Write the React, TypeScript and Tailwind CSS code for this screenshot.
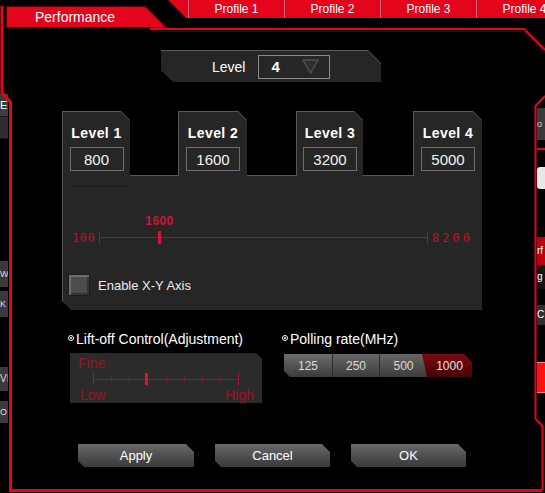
import React from "react";

function LevelTab({
  label,
  value,
  cls,
  tall,
}: {
  label: string;
  value: string;
  cls: string;
  tall?: boolean;
}) {
  return (
    <div
      className={
        "shrink-0 bg-[#585858] pt-px pl-px [clip-path:polygon(0_0,calc(100%_-_9px)_0,100%_9px,100%_100%,0_100%)] " +
        cls +
        (tall ? " h-[77px]" : " h-[65px]")
      }
    >
      <div className="flex h-full flex-col items-center bg-[#262626] [clip-path:polygon(0_0,calc(100%_-_9px)_0,100%_9px,100%_100%,0_100%)]">
        <div className="mt-[13px] h-[16px] text-[14px] font-bold leading-[16px] tracking-[0.4px] text-white">
          {label}
        </div>
        <div className="mt-[6px] flex h-[24px] w-[54px] items-center justify-center border border-[#6e6e6e] text-[15px] leading-none text-[#f2f2f2]">
          {value}
        </div>
        {tall && <div className="mt-auto mb-[1px] ml-[9px] h-[2px] w-[56px] self-start bg-[#1d1d1d]" />}
      </div>
    </div>
  );
}

function Btn({ label, cls }: { label: string; cls: string }) {
  return (
    <div
      className={
        "flex h-[23px] items-center justify-center bg-[#2a2a2a] [clip-path:polygon(0_0,calc(100%_-_8px)_0,100%_8px,100%_100%,6px_100%,0_calc(100%_-_6px))] " +
        cls
      }
    >
      <div className="flex h-full w-full items-center justify-center bg-linear-to-b from-[#6a6a6a] via-[#505050] to-[#3a3a3a] text-[13px] text-white [clip-path:polygon(0_0,calc(100%_-_8px)_0,100%_8px,100%_100%,6px_100%,0_calc(100%_-_6px))]">
        {label}
      </div>
    </div>
  );
}

export default function App() {
  const profiles = ["Profile 1", "Profile 2", "Profile 3", "Profile 4"];
  const digi = "font-['DejaVu_Sans_Mono','Liberation_Mono',monospace]";
  return (
    <div className="relative h-[493px] w-[545px] overflow-hidden bg-black font-['Liberation_Sans',Arial,sans-serif] text-white select-none">
      {/* background window fragments, left */}
      <div className="absolute left-0 top-[94px] flex w-[8px] flex-col">
        <div className="flex h-[22px] items-center overflow-hidden bg-[#3d3d3d] text-[11px] leading-none text-white">E</div>
        <div className="h-px bg-[#1a1a1a]" />
        <div className="h-[21px] bg-[#2e2e2e]" />
        <div className="h-px bg-[#151515]" />
        <div className="mt-[122px] flex h-[26px] items-center overflow-hidden bg-[#3a3a3a] text-[9px] leading-none text-[#ddd]">W</div>
        <div className="mt-[4px] flex h-[26px] items-center overflow-hidden bg-[#3a3a3a] text-[9px] leading-none text-[#ddd]">K</div>
        <div className="mt-[50px] flex h-[24px] items-center overflow-hidden bg-[#3a3a3a] text-[10px] leading-none text-[#ddd]">VI</div>
        <div className="mt-[10px] flex h-[22px] items-center overflow-hidden bg-[#3a3a3a] text-[9px] leading-none text-[#ddd]">O</div>
      </div>
      {/* background window fragments, right */}
      <div className="absolute left-[537px] top-[108px] flex w-[8px] flex-col">
        <div className="flex h-[32px] items-center overflow-hidden bg-[#3a3a3a] text-[9px] leading-none text-[#ccc]">o</div>
        <div className="mt-[8px] h-[2px] bg-[#d0061c]" />
        <div className="mt-[17px] h-[22px] rounded-l-[3px] bg-[#e8e8e8]" />
        <div className="mt-[48px] flex h-[28px] items-center overflow-hidden bg-[#b8000f] text-[10px] leading-none text-white">rf</div>
        <div className="flex h-[24px] items-center overflow-hidden bg-[#141414] text-[10px] leading-none text-white">g</div>
        <div className="mt-[16px] flex h-[20px] items-center overflow-hidden bg-[#2e2e2e] text-[10px] leading-none text-white">C</div>
        <div className="mt-[37px] h-[31px] border-y border-[#ff8080] bg-[#ff1010]" />
      </div>

      {/* header */}
      <div className="flex h-[30px]">
        <div className="mt-[6px] ml-[6px] h-[22px] w-[162px] shrink-0 bg-[#5e0009] [clip-path:polygon(0_0,140px_0,162px_22px,0_22px)]">
          <div className="mt-px ml-px flex h-[20px] w-[160px] items-center bg-[#e3051b] pl-[28px] text-[14px] leading-none text-white [clip-path:polygon(0_0,138px_0,158px_20px,0_20px)]">
            Performance
          </div>
        </div>
        <div className="flex h-[18px] flex-1 overflow-hidden bg-[#e3051b] [clip-path:polygon(0_0,100%_0,100%_100%,18px_100%)]">
          <div className="w-[20px] shrink-0" />
          {profiles.map((p) => (
            <div
              key={p}
              className="w-[96px] shrink-0 border-l border-[#f26370] text-center text-[12px] leading-[18px] text-white"
            >
              {p}
            </div>
          ))}
        </div>
      </div>

      {/* body */}
      <div className="flex flex-col">
        {/* level selector */}
        <div className="mt-[20px] ml-[161px] h-[32px] w-[220px] bg-[#5a5a5a] [clip-path:polygon(0_0,207px_0,220px_13px,220px_32px,13px_32px,0_20px)]">
          <div className="mt-px flex h-[31px] w-[220px] items-center bg-[#262626] [clip-path:polygon(0_0,207px_0,220px_13px,220px_31px,13px_31px,0_19px)]">
            <span className="ml-[51px] text-[14px] leading-none text-white">Level</span>
            <div className="ml-[13px] flex h-[24px] w-[72px] items-center border border-[#8a8a8a]">
              <span className="ml-[12px] text-[15px] font-bold leading-none text-white">4</span>
              <svg className="ml-[22px]" width="17" height="15" viewBox="0 0 17 15">
                <polygon points="1,1 16,1 8.5,14" fill="#2e2e2e" stroke="#4e4e4e" strokeWidth="1.5" />
              </svg>
            </div>
          </div>
        </div>

        {/* tabs + panel */}
        <div className="mt-[29px] ml-[62px] w-[420px]">
          <div className="relative z-10 flex h-[64px] items-start">
            <LevelTab label="Level 1" value="800" cls="w-[68px]" tall />
            <LevelTab label="Level 2" value="1600" cls="ml-[48px] w-[69px]" />
            <LevelTab label="Level 3" value="3200" cls="ml-[49px] w-[67px]" />
            <LevelTab label="Level 4" value="5000" cls="ml-[50px] w-[69px]" />
          </div>
          <div className="flex h-[135px] w-[420px] flex-col border-t border-l border-[#575757] bg-[#262626] [clip-path:polygon(0_0,100%_0,100%_100%,9px_100%,0_calc(100%_-_9px))]">
            {/* dpi slider */}
            <div className="mt-[55px] flex h-[13px] items-center">
              <span className={"ml-[9px] w-[27px] text-[12px] leading-none tracking-[0.5px] text-[#c0102e] " + digi}>100</span>
              <div className="relative h-[13px] w-[329px]">
                <div className="absolute left-0 top-[6px] h-px w-full bg-[#a8102c]" />
                <div className="absolute left-0 top-0 h-[13px] w-px bg-[#a8102c]" />
                <div className="absolute right-0 top-0 h-[13px] w-px bg-[#a8102c]" />
                <div className="absolute left-[59px] top-0 h-[13px] w-[3px] bg-[#e01034]" />
                <div className="absolute left-[44px] -top-[16px] w-[33px] text-center text-[12px] font-bold leading-none tracking-[0.4px] text-[#d01436]">
                  1600
                </div>
              </div>
              <span className={"ml-[4px] text-[12px] leading-none tracking-[3px] text-[#c0102e] " + digi}>8200</span>
            </div>
            {/* checkbox */}
            <div className="mt-[30px] ml-[5px] flex items-center">
              <div className="h-[22px] w-[22px] border border-[#1c1c1c] bg-[#4c4c4c] shadow-[inset_2px_2px_0_#6e6e6e,inset_-2px_-2px_0_#353535]" />
              <span className="ml-[8px] text-[13px] leading-none text-[#ececec]">Enable X-Y Axis</span>
            </div>
          </div>
        </div>

        {/* lift-off + polling */}
        <div className="mt-[21px] ml-[68px] flex">
          <div className="flex w-[214px] flex-col">
            <div className="flex h-[16px] items-center text-[14px] leading-[16px] text-white">
              <span className="mr-[2px] mb-[3px] flex h-[6px] w-[6px] items-center justify-center rounded-full border border-white">
                <span className="h-[2px] w-[2px] rounded-full bg-white" />
              </span>
              Lift-off Control(Adjustment)
            </div>
            <div className="mt-[6px] ml-[2px] flex h-[50px] w-[192px] flex-col bg-[#2b2b2b] [clip-path:polygon(0_0,calc(100%_-_6px)_0,100%_6px,100%_100%,0_100%)]">
              <div className="mt-[4px] ml-[8px] h-[13px] text-[14px] leading-[13px] text-[#9c1228]">Fine</div>
              <div className="relative mt-[3px] ml-[23px] flex h-[12px] w-[146px] items-center justify-between">
                <div className="absolute left-0 top-[6px] h-px w-full bg-[#a8102c]" />
                <div className="h-[12px] w-px bg-[#a8102c]" />
                {[1, 2, 3, 4, 5, 6, 7].map((i) => (
                  <div key={i} className="h-[4px] w-px bg-[#a8102c]" />
                ))}
                <div className="h-[12px] w-px bg-[#a8102c]" />
                <div className="absolute left-[52px] top-0 h-[12px] w-[3px] bg-[#e01034]" />
              </div>
              <div className="mt-[4px] flex h-[13px] justify-between pl-[10px] pr-[8px] text-[14px] leading-[13px] text-[#9c1228]">
                <span>Low</span>
                <span>High</span>
              </div>
            </div>
          </div>
          <div className="flex flex-col">
            <div className="flex h-[16px] items-center text-[14px] leading-[16px] text-white">
              <span className="mr-[2px] mb-[3px] flex h-[6px] w-[6px] items-center justify-center rounded-full border border-white">
                <span className="h-[2px] w-[2px] rounded-full bg-white" />
              </span>
              Polling rate(MHz)
            </div>
            <div className="mt-[7px] ml-[2px] flex h-[23px] w-[188px] [clip-path:polygon(0_0,calc(100%_-_8px)_0,100%_8px,100%_100%,6px_100%,0_calc(100%_-_6px))]">
              <div className="flex w-[49px] items-center justify-center border-r border-[#2c2c2c] bg-linear-to-b from-[#6c6c6c] to-[#3c3c3c] text-[12px] text-[#dcdcdc]">125</div>
              <div className="flex w-[47px] items-center justify-center border-r border-[#2c2c2c] bg-linear-to-b from-[#686868] to-[#3c3c3c] text-[12px] text-[#dcdcdc]">250</div>
              <div className="flex w-[47px] items-center justify-center bg-linear-to-b from-[#666] to-[#3c3c3c] text-[12px] text-[#dcdcdc]">500</div>
              <div className="-ml-[5px] flex w-[50px] items-center justify-center bg-linear-to-b from-[#7a0a10] to-[#470306] pl-[5px] text-[12px] text-[#e6e6e6] [clip-path:polygon(0_0,100%_0,100%_100%,5px_100%)]">1000</div>
            </div>
          </div>
        </div>

        {/* buttons */}
        <div className="mt-[41px] ml-[78px] flex gap-[21px]">
          <Btn label="Apply" cls="w-[116px]" />
          <Btn label="Cancel" cls="w-[115px]" />
          <Btn label="OK" cls="w-[115px]" />
        </div>
      </div>

      {/* window frame drawing */}
      <svg className="pointer-events-none absolute left-0 top-0" width="545" height="493" viewBox="0 0 545 493">
        <polyline points="150,29 524,29 545,50" fill="none" stroke="#e3051b" strokeWidth="2" />
        <polyline points="152,31.5 523,31.5 545,53.5" fill="none" stroke="#4a0006" strokeWidth="1" />
        <polyline points="2,6 2,93 10.5,102 10.5,490.5 542,490.5" fill="none" stroke="#e3051b" strokeWidth="3" />
        <polyline points="545,96 535.5,106 535.5,419 542.5,426 542.5,490" fill="none" stroke="#e3051b" strokeWidth="2" />
      </svg>
    </div>
  );
}
